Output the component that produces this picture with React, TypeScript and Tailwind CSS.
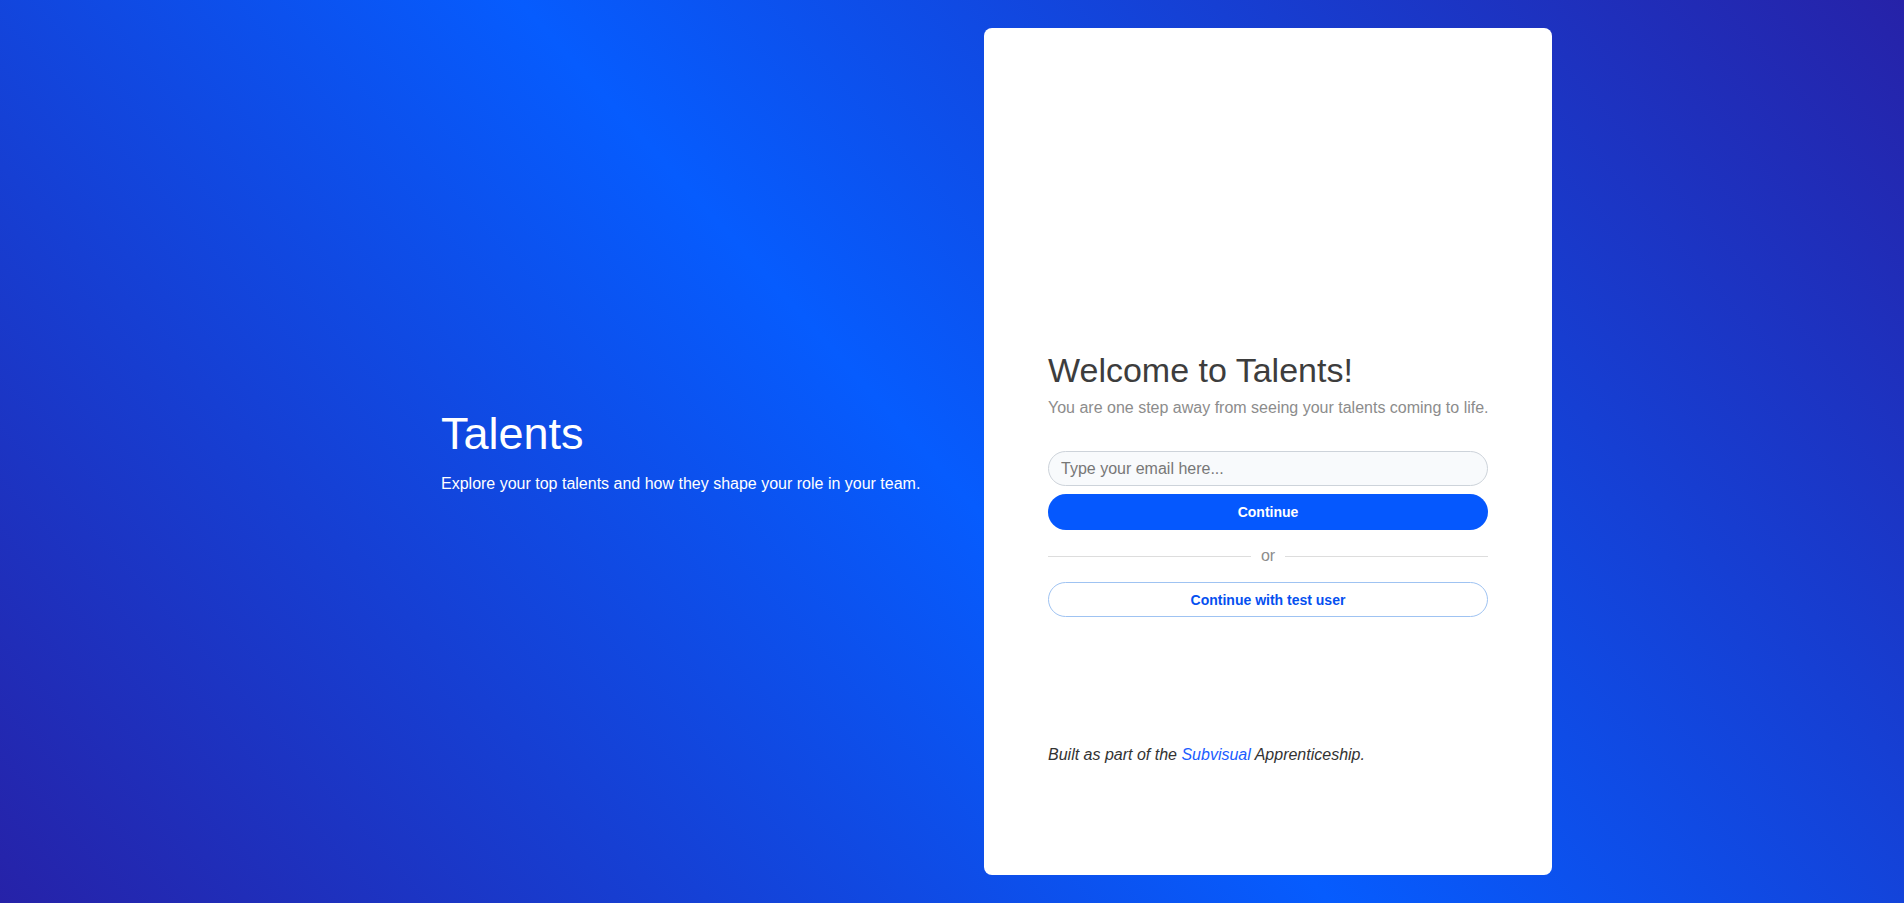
export default function App() {
  return (
    <div
      className="min-h-screen w-full flex justify-center bg-[linear-gradient(48deg,#2622a8_0%,#065cfe_49%,#2622a8_100%)]"
      style={{ fontFamily: '"Liberation Sans", Arial, sans-serif' }}
    >
      <div className="w-[1200px] grid grid-cols-2">
        {/* left intro */}
        <div className="flex flex-col justify-center pl-[89px] text-white">
          <h1 className="text-[45px] leading-[52px] font-normal">Talents</h1>
          <p className="text-base leading-6 mt-[12px]">
            Explore your top talents and how they shape your role in your team.
          </p>
        </div>

        {/* login card */}
        <div className="pl-8 py-7">
          <div className="h-[847px] bg-white rounded-lg px-16 pt-[322px] flex flex-col">
            <h2 className="text-[34px] leading-10 text-[#3d3d3d]">Welcome to Talents!</h2>
            <p className="mt-[6px] whitespace-nowrap text-base leading-6 text-[#8c8c8c]">
              You are one step away from seeing your talents coming to life.
            </p>

            <input
              type="email"
              placeholder="Type your email here..."
              className="mt-[31px] h-[35px] w-full rounded-full border border-[#cdd3da] bg-[#f8fafc] px-3 text-base text-[#333] placeholder:text-[#777] outline-none"
            />
            <button
              type="button"
              className="mt-2 h-9 w-full rounded-full bg-[#0558fe] text-sm font-bold text-white"
            >
              Continue
            </button>

            <div className="mt-[14px] flex items-center gap-[10px]">
              <div className="h-px flex-1 bg-[#dddddd]" />
              <span className="text-base leading-6 text-[#8c8c8c]">or</span>
              <div className="h-px flex-1 bg-[#dddddd]" />
            </div>

            <button
              type="button"
              className="mt-[14px] h-[35px] w-full rounded-full border border-[#9fc3f2] bg-white text-sm font-bold text-[#0550f0]"
            >
              Continue with test user
            </button>

            <p className="mt-[126px] text-base leading-6 italic text-[#333]">
              Built as part of the{" "}
              <a href="#" className="text-[#1a5cff]">
                Subvisual
              </a>{" "}
              Apprenticeship.
            </p>
          </div>
        </div>
      </div>
    </div>
  );
}
